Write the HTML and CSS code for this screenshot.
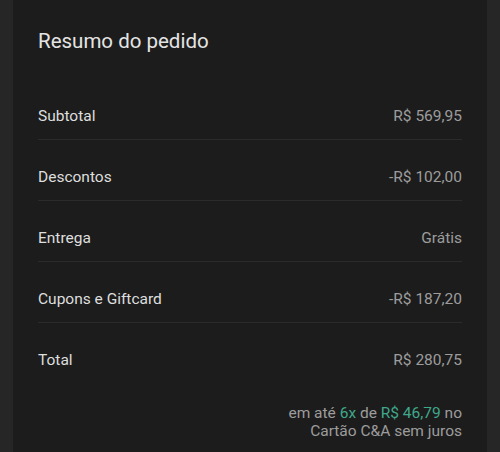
FILE: index.html
```html
<!DOCTYPE html>
<html lang="pt-BR">
<head>
    <meta charset="UTF-8">
    <meta name="viewport" content="width=device-width, initial-scale=1.0">
    <title>Resumo do pedido</title>
    <link rel="stylesheet" href="styles.css">
</head>
<body>

    <div class="summary">
        <h2 class="summary-title">Resumo do pedido</h2>

        <div class="summary-row">
            <span class="label">Subtotal</span>
            <span class="value">R$ 569,95</span>
        </div>
        <div class="summary-row">
            <span class="label">Descontos</span>
            <span class="value">-R$ 102,00</span>
        </div>
        <div class="summary-row">
            <span class="label">Entrega</span>
            <span class="value">Grátis</span>
        </div>
        <div class="summary-row">
            <span class="label">Cupons e Giftcard</span>
            <span class="value">-R$ 187,20</span>
        </div>
        <div class="summary-row total">
            <span class="label">Total</span>
            <span class="value">R$ 280,75</span>
        </div>

        <p class="installments">
            em até <span class="highlight">6x</span> de <span class="highlight">R$ 46,79</span> no<br>
            Cartão C&amp;A sem juros
        </p>
    </div>

</body>
</html>
```

FILE: styles.css
```css
body {
    margin: 0;
    padding: 0;
    background-color: #262626;
    font-family: Roboto, 'Noto Sans', sans-serif;
    color: #dedede;
}

.summary {
    margin: 0 13px;
    padding: 27px 25px 30px;
    min-height: 395px;
    background-color: #1c1c1c;
}

.summary-title {
    margin: 0 0 24px;
    font-size: 20.5px;
    font-weight: 400;
    line-height: 28px;
    color: #e4e4e4;
}

.summary-row {
    display: flex;
    justify-content: space-between;
    padding: 28px 0 14px;
    font-size: 15.5px;
    line-height: 18px;
    border-bottom: 1px solid #2b2b2b;
}

.summary-row.total {
    border-bottom: none;
}

.label {
    color: #dedede;
}

.value {
    color: #9c9c9c;
}

.installments {
    margin: 21px 0 0;
    text-align: right;
    font-size: 15.5px;
    line-height: 18px;
    color: #9c9c9c;
}

.highlight {
    color: #3fa88b;
}
```
